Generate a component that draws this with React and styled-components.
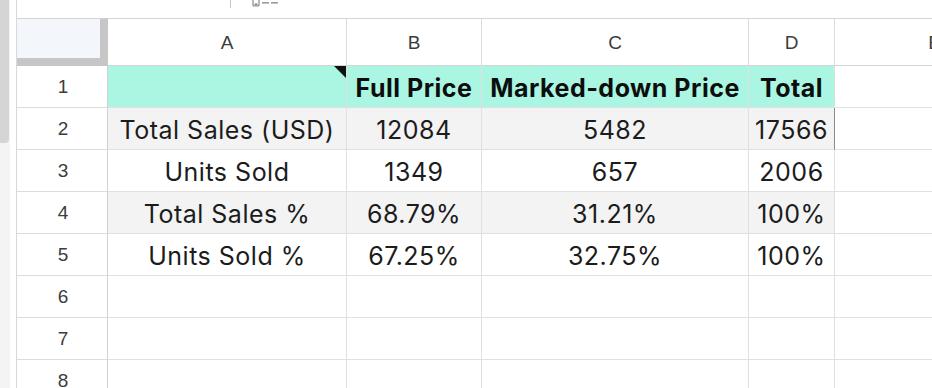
import React from "react";
import styled, { createGlobalStyle } from "styled-components";

const GlobalStyle = createGlobalStyle`
  html, body {
    margin: 0;
    padding: 0;
    background: #ffffff;
    overflow: hidden;
  }
`;

const columns = [
  { key: "A", width: 239 },
  { key: "B", width: 135 },
  { key: "C", width: 267 },
  { key: "D", width: 86 },
  { key: "E", width: 200 },
];

const rows = [
  { n: 1, head: true, cells: ["", "Full Price", "Marked-down Price", "Total"] },
  { n: 2, striped: true, cells: ["Total Sales (USD)", "12084", "5482", "17566"] },
  { n: 3, cells: ["Units Sold", "1349", "657", "2006"] },
  { n: 4, striped: true, cells: ["Total Sales %", "68.79%", "31.21%", "100%"] },
  { n: 5, cells: ["Units Sold %", "67.25%", "32.75%", "100%"] },
  { n: 6, cells: [] },
  { n: 7, cells: [] },
  { n: 8, cells: [] },
];

export default function App() {
  return (
    <>
      <GlobalStyle />
      <Page>
        <ScrollTrack>
          <ScrollThumb />
        </ScrollTrack>
        <Sheet>
          <TopStrip>
            <StripDivider />
            <StripIcon width="28" height="8" viewBox="0 0 28 8">
              <rect x="1" y="-3" width="6" height="9" rx="1" fill="none" stroke="#8a8a8a" strokeWidth="1.2" />
              <rect x="2.5" y="3.5" width="3" height="2" fill="#8a8a8a" />
              <rect x="10" y="2" width="7" height="1.6" fill="#9a9a9a" />
              <rect x="19" y="2" width="7" height="1.6" fill="#9a9a9a" />
            </StripIcon>
          </TopStrip>
          <Grid $cols={columns.map((c) => `${c.width}px`).join(" ")}>
            <Corner />
            {columns.map((c) => (
              <ColHeader key={c.key}>{c.key}</ColHeader>
            ))}
            {rows.map((r) => (
              <React.Fragment key={r.n}>
                <RowHeader>{r.n}</RowHeader>
                {columns.map((c, i) => {
                  const inTable = i < 4 && r.n <= 5;
                  return (
                    <Cell
                      key={c.key}
                      $head={r.head && inTable}
                      $striped={r.striped && inTable}
                      $edge={r.n === 2 && i === 3}
                    >
                      {r.n === 1 && i === 0 && <CommentMark />}
                      {r.cells[i] || ""}
                    </Cell>
                  );
                })}
              </React.Fragment>
            ))}
          </Grid>
        </Sheet>
      </Page>
    </>
  );
}

const Page = styled.div`
  display: flex;
  width: 932px;
  height: 388px;
  overflow: hidden;
  background: #ffffff;
`;

const ScrollTrack = styled.div`
  width: 16px;
  flex: none;
  background: linear-gradient(to right, #f4f4f4 0 10px, #ffffff 10px);
`;

const ScrollThumb = styled.div`
  width: 9px;
  height: 143px;
  background: #d5d5d5;
  border-radius: 0 0 4px 0;
`;

const Sheet = styled.div`
  flex: 1;
  display: flex;
  flex-direction: column;
  border-left: 1px solid #d9d9d9;
  min-width: 0;
`;

const TopStrip = styled.div`
  height: 18px;
  flex: none;
  display: flex;
  align-items: flex-start;
  border-bottom: 1px solid #d4d4d4;
  padding-left: 213px;
  gap: 21px;
`;

const StripDivider = styled.div`
  width: 1px;
  height: 8px;
  background: #c8c8c8;
`;

const StripIcon = styled.svg`
  display: block;
`;

const Grid = styled.div`
  display: grid;
  grid-template-columns: 91px ${(p) => p.$cols};
  grid-template-rows: 47px repeat(8, 42px);
  font-family: Inter, "Noto Sans", sans-serif;
`;

const Corner = styled.div`
  background: #f3f6fb;
  border-right: 8px solid #c6c6c6;
  border-bottom: 8px solid #c6c6c6;
`;

const ColHeader = styled.div`
  display: flex;
  align-items: center;
  justify-content: center;
  font-family: "Liberation Sans", Arial, sans-serif;
  font-size: 19px;
  color: #3c3c3c;
  border-right: 1px solid #dcdcdc;
  border-bottom: 1px solid #d4d4d4;
  padding-top: 2px;
`;

const RowHeader = styled.div`
  display: flex;
  align-items: center;
  justify-content: center;
  font-family: "Liberation Sans", Arial, sans-serif;
  font-size: 19px;
  color: #3c3c3c;
  border-right: 1px solid #d0d0d0;
  border-bottom: 1px solid #dcdcdc;
  padding-left: 2px;
`;

const Cell = styled.div`
  position: relative;
  display: flex;
  align-items: center;
  justify-content: center;
  white-space: nowrap;
  font-size: 25px;
  font-weight: ${(p) => (p.$head ? 700 : 400)};
  letter-spacing: 0.5px;
  color: ${(p) => (p.$head ? "#0d0d0d" : "#1c1c1c")};
  background: ${(p) => (p.$head ? "#aaf6e2" : p.$striped ? "#f3f3f3" : "#ffffff")};
  border-right: 1px solid ${(p) => (p.$edge ? "#8a8a8a" : "#e0e0e0")};
  border-bottom: 1px solid #e0e0e0;
  padding-top: 2px;
`;

const CommentMark = styled.span`
  position: absolute;
  top: 0;
  right: 0;
  width: 0;
  height: 0;
  border-top: 12px solid #111111;
  border-left: 12px solid transparent;
`;
